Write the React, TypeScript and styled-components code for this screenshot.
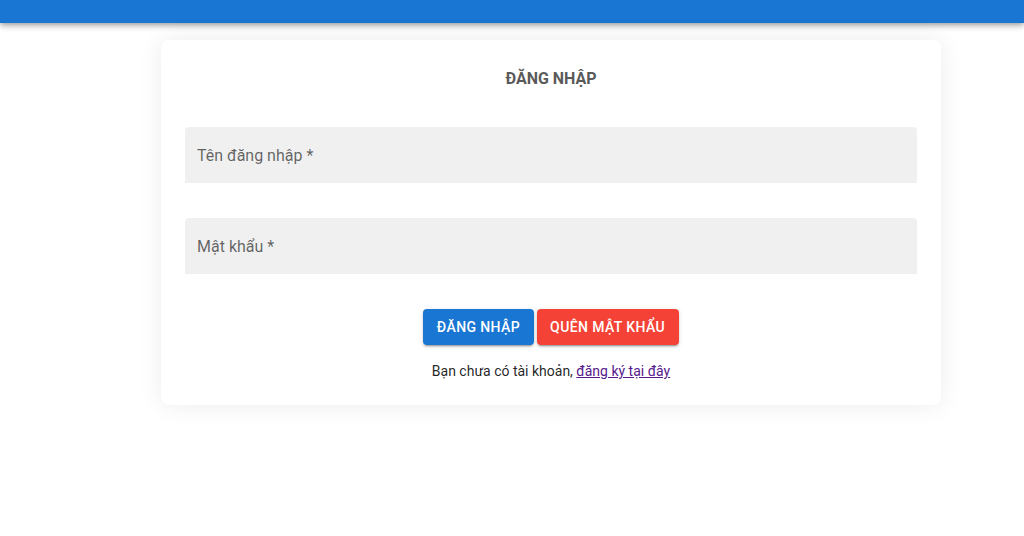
import styled, { createGlobalStyle } from "styled-components";

const GlobalStyle = createGlobalStyle`
  * {
    box-sizing: border-box;
  }
  body {
    margin: 0;
    background: #fff;
    font-family: Roboto, "Liberation Sans", Arial, sans-serif;
  }
`;

export default function App() {
  return (
    <>
      <GlobalStyle />
      <Page>
        <AppBar />
        <Main>
          <Card>
            <Title>ĐĂNG NHẬP</Title>
            <Form>
              <Field>
                <FieldLabel>Tên đăng nhập *</FieldLabel>
              </Field>
              <Field>
                <FieldLabel>Mật khẩu *</FieldLabel>
              </Field>
              <ButtonRow>
                <Button color="#1976d2">ĐĂNG NHẬP</Button>
                <Button color="#f44336">QUÊN MẬT KHẨU</Button>
              </ButtonRow>
            </Form>
            <Footer>
              Bạn chưa có tài khoản, <a href="#register">đăng ký tại đây</a>
            </Footer>
          </Card>
        </Main>
      </Page>
    </>
  );
}

const Page = styled.div`
  width: 100%;
  min-height: 536px;
  background: #fff;
`;

const AppBar = styled.header`
  height: 23px;
  background-color: #1976d2;
  box-shadow: 0px 2px 4px -1px rgba(0, 0, 0, 0.2),
    0px 4px 5px 0px rgba(0, 0, 0, 0.14), 0px 1px 10px 0px rgba(0, 0, 0, 0.12);
`;

const Main = styled.main`
  padding: 17px 83px 0 161px;
`;

const Card = styled.section`
  width: 780px;
  background: #fff;
  border-radius: 8px;
  padding: 24px;
  box-shadow: 0 0 24px rgba(0, 0, 0, 0.08);
  display: flex;
  flex-direction: column;
`;

const Title = styled.h2`
  margin: 1px 0 0;
  font-size: 16px;
  line-height: 28px;
  font-weight: 700;
  color: #5a5a5a;
  text-align: center;
`;

const Form = styled.div`
  display: flex;
  flex-direction: column;
  gap: 35px;
  margin-top: 34px;
`;

const Field = styled.div`
  height: 56px;
  background: #f0f0f0;
  border-radius: 4px 4px 0 0;
  display: flex;
  align-items: center;
  padding: 0 12px;
`;

const FieldLabel = styled.span`
  font-size: 16px;
  color: rgba(0, 0, 0, 0.6);
`;

const ButtonRow = styled.div`
  display: flex;
  justify-content: center;
  gap: 3px;
`;

const Button = styled.button<{ color: string }>`
  height: 36px;
  padding: 6px 13.5px;
  border: none;
  border-radius: 4px;
  background: ${(p) => p.color};
  color: #fff;
  font-family: Roboto, "Liberation Sans", Arial, sans-serif;
  font-size: 14px;
  font-weight: 500;
  letter-spacing: 0.02857em;
  text-transform: uppercase;
  cursor: pointer;
  box-shadow: 0px 3px 1px -2px rgba(0, 0, 0, 0.2),
    0px 2px 2px 0px rgba(0, 0, 0, 0.14), 0px 1px 5px 0px rgba(0, 0, 0, 0.12);
`;

const Footer = styled.p`
  margin: 16px 0 0;
  font-size: 14px;
  line-height: 20px;
  color: rgba(0, 0, 0, 0.87);
  text-align: center;

  a {
    color: #551a8b;
  }
`;
